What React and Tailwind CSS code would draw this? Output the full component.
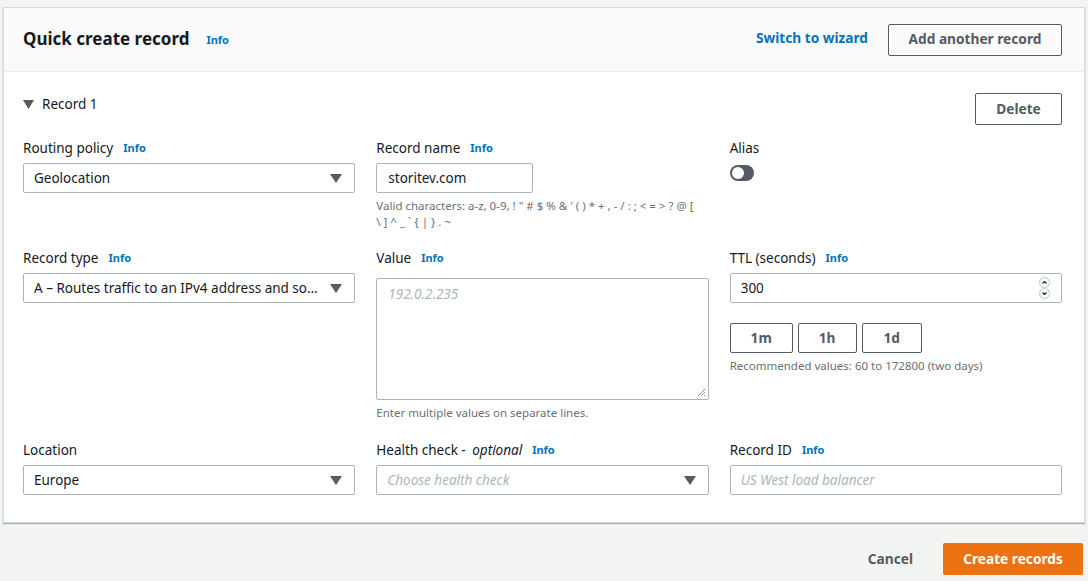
import React from 'react';

const Info = () => (
  <span className="ml-[10px] text-[11px] font-bold text-[#0073bb]">Info</span>
);

const Caret = () => (
  <svg width="12" height="9" viewBox="0 0 12 9" className="shrink-0">
    <path d="M0 0 L12 0 L6 9 Z" fill="#545b64" />
  </svg>
);

const Label = ({ children, info = true }) => (
  <div className="flex items-center h-[20px] text-[13.5px] text-[#16191f]">
    <span>{children}</span>
    {info && <Info />}
  </div>
);

const Select = ({ value, placeholder }) => (
  <div className="flex items-center justify-between h-[30px] border border-[#aab7b8] rounded-[2px] bg-white pl-[10px] pr-[12px]">
    {value ? (
      <span className="text-[13.5px] text-[#16191f] truncate pr-3">{value}</span>
    ) : (
      <span className="text-[13.5px] italic text-[#aab7b8]">{placeholder}</span>
    )}
    <Caret />
  </div>
);

const SmallBtn = ({ children, w }) => (
  <div className={`flex items-center justify-center h-[30px] ${w} border border-[#545b64] rounded-[2px] text-[13.7px] font-bold text-[#545b64]`}>
    {children}
  </div>
);

export default function App() {
  return (
    <div className="min-h-[581px] bg-[#f2f3f3] pt-[7px]" style={{ fontFamily: '"Noto Sans", sans-serif' }}>
      {/* Card */}
      <div className="ml-[3px] mr-[3px] bg-white border border-[#d5dbdb] shadow-[0_1px_1px_0_rgba(0,28,36,0.3)]">
        {/* Header */}
        <div className="flex items-center justify-between bg-[#fafafa] border-b border-[#eaeded] h-[64px] pl-[19px] pr-[22px]">
          <div className="flex items-center">
            <h1 className="text-[17px] font-bold text-[#16191f] mt-[-2px]">Quick create record</h1>
            <span className="ml-[17px] mt-[1px] text-[11px] font-bold text-[#0073bb]">Info</span>
          </div>
          <div className="flex items-center">
            <span className="text-[13.7px] font-bold text-[#0073bb] mr-[20px] mt-[-2px]">Switch to wizard</span>
            <div className="flex items-center justify-center h-[32px] w-[174px] border border-[#545b64] rounded-[2px] text-[13.7px] font-bold text-[#545b64]">
              Add another record
            </div>
          </div>
        </div>

        {/* Body */}
        <div className="pl-[19px] pr-[22px] pt-[21px] pb-[27px]">
          <div className="flex items-center justify-between">
            <div className="flex items-center gap-[8px] mt-[-10px]">
              <svg width="11" height="9" viewBox="0 0 11 9"><path d="M0 0 L11 0 L5.5 9 Z" fill="#545b64" /></svg>
              <span className="text-[13.5px] text-[#16191f]">Record 1</span>
            </div>
            <div className="flex items-center justify-center h-[32px] w-[87px] border border-[#545b64] rounded-[2px] text-[13.7px] font-bold text-[#545b64]">
              Delete
            </div>
          </div>

          <div className="grid grid-cols-3 gap-x-[21px] mt-[13px]">
            {/* Row 1 */}
            <div>
              <Label>Routing policy</Label>
              <div className="mt-[5px]"><Select value="Geolocation" /></div>
            </div>
            <div>
              <Label>Record name</Label>
              <div className="mt-[5px] flex items-center h-[30px] w-[157px] border border-[#aab7b8] rounded-[2px] pl-[11px] text-[13.5px] text-[#16191f]">
                storitev.com
              </div>
              <p className="mt-[5px] text-[11.5px] leading-[16px] text-[#687078]">
                Valid characters: a-z, 0-9, ! " # $ % &amp; ' ( ) * + , - / : ; &lt; = &gt; ? @ [<br />
                \ ] ^ _ ` {'{'} | {'}'} . ~
              </p>
            </div>
            <div>
              <Label info={false}>Alias</Label>
              <div className="mt-[7px] w-[24px] h-[16px] rounded-full bg-[#545b64] flex items-center pl-[2px]">
                <div className="w-[12px] h-[12px] rounded-full bg-white" />
              </div>
            </div>

            {/* Row 2 */}
            <div className="mt-[18px]">
              <Label>Record type</Label>
              <div className="mt-[5px]"><Select value="A – Routes traffic to an IPv4 address and some AWS resources" /></div>
            </div>
            <div className="mt-[18px]">
              <Label>Value</Label>
              <div className="relative mt-[10px] h-[122px] border border-[#aab7b8] rounded-[2px] pl-[11px] pt-[2px]">
                <span className="text-[13.5px] italic text-[#aab7b8]">192.0.2.235</span>
                <svg width="9" height="9" viewBox="0 0 9 9" className="absolute right-[2px] bottom-[2px]">
                  <path d="M8 1 L1 8 M8 4 L4 8 M8 7 L7 8" stroke="#879596" strokeWidth="1" />
                </svg>
              </div>
              <p className="mt-[4px] text-[11.5px] text-[#687078]">Enter multiple values on separate lines.</p>
            </div>
            <div className="mt-[18px]">
              <Label>TTL (seconds)</Label>
              <div className="mt-[5px] flex items-center justify-between h-[30px] border border-[#aab7b8] rounded-[2px] pl-[10px] pr-[11px] text-[13.5px] text-[#16191f]">
                <span>300</span>
                <div className="flex flex-col">
                  <svg width="11" height="11" viewBox="0 0 11 11">
                    <circle cx="5.5" cy="5.5" r="5" fill="none" stroke="#aab7b8" strokeWidth="0.8" />
                    <path d="M3.5 6.5 L5.5 4.5 L7.5 6.5" fill="none" stroke="#16191f" strokeWidth="1.1" />
                  </svg>
                  <svg width="11" height="11" viewBox="0 0 11 11">
                    <circle cx="5.5" cy="5.5" r="5" fill="none" stroke="#aab7b8" strokeWidth="0.8" />
                    <path d="M3.5 4.5 L5.5 6.5 L7.5 4.5" fill="none" stroke="#16191f" strokeWidth="1.1" />
                  </svg>
                </div>
              </div>
              <div className="flex gap-[5px] mt-[20px]">
                <SmallBtn w="w-[63px]">1m</SmallBtn>
                <SmallBtn w="w-[59px]">1h</SmallBtn>
                <SmallBtn w="w-[60px]">1d</SmallBtn>
              </div>
              <p className="mt-[4px] text-[11.5px] text-[#687078]">Recommended values: 60 to 172800 (two days)</p>
            </div>

            {/* Row 3 */}
            <div className="mt-[19px]">
              <Label info={false}>Location</Label>
              <div className="mt-[5px]"><Select value="Europe" /></div>
            </div>
            <div className="mt-[19px]">
              <Label>Health check - <i className="ml-[3px]">optional</i></Label>
              <div className="mt-[5px]"><Select placeholder="Choose health check" /></div>
            </div>
            <div className="mt-[19px]">
              <Label>Record ID</Label>
              <div className="mt-[5px] flex items-center h-[30px] border border-[#aab7b8] rounded-[2px] pl-[10px]">
                <span className="text-[13.5px] italic text-[#aab7b8]">US West load balancer</span>
              </div>
            </div>
          </div>
        </div>
      </div>

      {/* Footer */}
      <div className="flex items-center justify-end pr-[5px] mt-[20px]">
        <span className="text-[13.7px] font-bold text-[#545b64] mr-[30px]">Cancel</span>
        <div className="flex items-center justify-center h-[32px] w-[140px] bg-[#ec7211] rounded-[2px] text-[13.7px] font-bold text-white">
          Create records
        </div>
      </div>
    </div>
  );
}
